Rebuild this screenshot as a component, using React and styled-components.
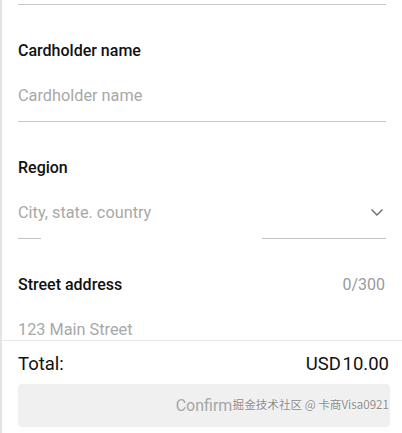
import React from "react";
import styled, { createGlobalStyle } from "styled-components";

const GlobalStyle = createGlobalStyle`
  html, body {
    margin: 0;
    padding: 0;
    background: #fff;
  }
  body {
    font-family: Roboto, "Noto Sans CJK SC", sans-serif;
  }
`;

const Page = styled.div`
  position: relative;
  width: 402px;
  height: 433px;
  display: flex;
  flex-direction: column;
  box-sizing: border-box;
  border-left: 2px solid #e4e4e4;
  overflow: hidden;
`;

const Scroll = styled.div`
  box-sizing: border-box;
  height: 340px;
  overflow: hidden;
  padding: 4px 16px 0 16px;
  flex-shrink: 0;
`;

const Divider = styled.div`
  height: 1px;
  background: ${(p) =>
    p.$broken
      ? "linear-gradient(to right, #c4c4c4 0 23px, transparent 23px 244px, #c4c4c4 244px)"
      : "#c8c8c8"};
`;

const Field = styled.div`
  padding-top: 35px;
`;

const LabelRow = styled.div`
  display: flex;
  justify-content: space-between;
  align-items: center;
  height: 20px;
`;

const Label = styled.span`
  font-size: 16px;
  font-weight: 500;
  color: #111;
`;

const Counter = styled.span`
  font-size: 16px;
  color: #9a9a9a;
  margin-right: 1px;
`;

const InputRow = styled.div`
  display: flex;
  justify-content: space-between;
  align-items: center;
  height: 20px;
  margin-top: 25px;
  padding-bottom: 16px;
`;

const Placeholder = styled.span`
  font-size: 16.3px;
  color: #a8a8a8;
`;

const Chevron = styled.svg`
  width: 14px;
  height: 14px;
  margin-right: 2px;
`;

const Footer = styled.div`
  flex: 1;
  border-top: 1px solid #e8e8e8;
  padding: 0 12px 0 16px;
  display: flex;
  flex-direction: column;
`;

const TotalRow = styled.div`
  display: flex;
  justify-content: space-between;
  align-items: center;
  height: 46px;
  font-size: 18.5px;
  color: #111;
`;

const Amount = styled.span`
  word-spacing: -3px;
  margin-right: 1px;
`;

const ConfirmButton = styled.button`
  height: 43px;
  border: none;
  border-radius: 4px;
  background: #f0f0f0;
  color: #a6a6a6;
  font-family: Roboto, sans-serif;
  font-size: 16px;
  margin-top: -3px;
`;

const Watermark = styled.div`
  position: absolute;
  right: 13px;
  bottom: 21px;
  font-size: 11.6px;
  color: #8a8a8a;
  text-shadow: 0 0 2px #fff, 0 0 1px #fff;
  font-family: "Noto Sans CJK SC", Roboto, sans-serif;
  white-space: nowrap;
`;

function FormField({ label, placeholder, counter, select, broken }) {
  return (
    <Field>
      <LabelRow>
        <Label>{label}</Label>
        {counter && <Counter>{counter}</Counter>}
      </LabelRow>
      <InputRow>
        <Placeholder>{placeholder}</Placeholder>
        {select && (
          <Chevron viewBox="0 0 14 14" fill="none">
            <path d="M1.5 4.5 L7 10 L12.5 4.5" stroke="#6a6a6a" strokeWidth="1.4" />
          </Chevron>
        )}
      </InputRow>
      <Divider $broken={broken} />
    </Field>
  );
}

export default function App() {
  return (
    <>
      <GlobalStyle />
      <Page>
        <Scroll>
          <Divider />
          <FormField label="Cardholder name" placeholder="Cardholder name" />
          <FormField label="Region" placeholder="City, state. country" select broken />
          <FormField label="Street address" placeholder="123 Main Street" counter="0/300" />
        </Scroll>
        <Footer>
          <TotalRow>
            <span>Total:</span>
            <Amount>USD 10.00</Amount>
          </TotalRow>
          <ConfirmButton disabled>Confirm</ConfirmButton>
        </Footer>
        <Watermark>掘金技术社区 @ 卡商Visa0921</Watermark>
      </Page>
    </>
  );
}
